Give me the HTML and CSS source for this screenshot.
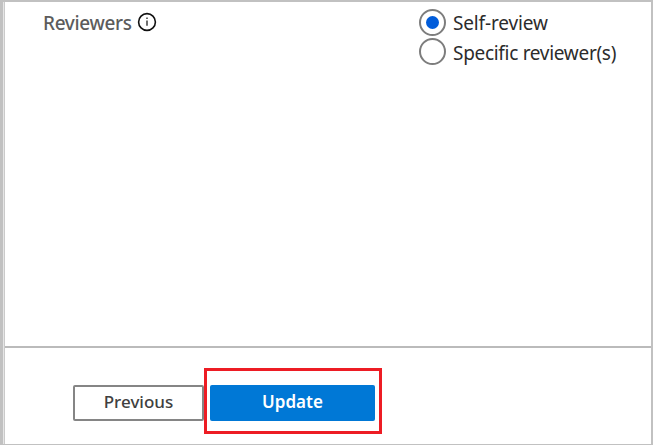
FILE: index.html
```
<!DOCTYPE html>
<html lang="en">
<head>
<meta charset="utf-8">
<title>Access review</title>
<link rel="stylesheet" href="styles.css">
</head>
<body>
<div class="frame">
  <main class="content">
    <div class="label"><span class="label-text">Reviewers</span>
      <svg class="info" width="20" height="20" viewBox="0 0 20 20"><circle cx="10" cy="10" r="8.4" fill="none" stroke="#111" stroke-width="1.6"/><path d="M10 8.5v5.3M10 5.4v1.7" stroke="#555" stroke-width="1.7"/></svg>
    </div>
    <div class="options">
      <label class="option"><span class="radio checked"></span><span class="self">Self-review</span></label>
      <label class="option"><span class="radio"></span><span class="specific">Specific reviewer(s)</span></label>
    </div>
  </main>
  <footer class="footer">
    <button class="btn previous">Previous</button>
    <div class="highlight"><button class="btn update">Update</button></div>
  </footer>
</div>
</body>
</html>
```
FILE: styles.css
```
* { box-sizing: border-box; }
body { margin: 0; background: #fff; font-family: "Noto Sans", "Open Sans", sans-serif; }
.frame {
  width: 653px; height: 445px;
  display: flex; flex-direction: column;
  border: solid #c1c1c1; border-width: 2px 2px 1px 3px;
  box-shadow: inset 1px 0 #e6e6e6, inset 2px 0 #cacaca;
  overflow: hidden;
}
.content { height: 344px; display: flex; padding-left: 40px; }
.label { width: 376px; display: flex; align-items: flex-start; padding-top: 7px; color: #5c5c5c; font-size: 19px; font-weight: 500; line-height: 28px; }
.label-text { width: 94px; letter-spacing: -0.35px; }
.info { display: block; margin-top: 3px; }
.options { padding-top: 7px; font-size: 19px; color: #2c2c2c; }
.option { height: 29px; display: flex; align-items: flex-start; line-height: 28px; white-space: nowrap; }
.radio { width: 27px; height: 27px; flex: none; margin-right: 7px; border: 2px solid #7d7d7d; border-radius: 50%; display: grid; place-items: center; }
.checked::after { content: ""; width: 13px; height: 13px; border-radius: 50%; background: #015cda; }
.self { letter-spacing: -0.15px; }
.specific { letter-spacing: -0.3px; padding-top: 1px; }
.footer { height: 98px; margin-left: 2px; border-top: 2px solid #bbb; padding: 20px 0 0 68px; display: flex; align-items: flex-start; }
.btn { display: block; margin: 0; padding: 0 0 2px; height: 36px; border-radius: 2px; font: 500 17px/30px "Noto Sans", sans-serif; }
.previous { width: 131px; margin-top: 17px; border: 2px solid #858585; background: #fff; color: #404040; }
.highlight { width: 178px; height: 66px; border: 3px solid #ed1c24; padding: 14px 0 0 3px; }
.update { width: 165px; border: 0; background: #0078d6; color: #fff; font-weight: 600; }
```
